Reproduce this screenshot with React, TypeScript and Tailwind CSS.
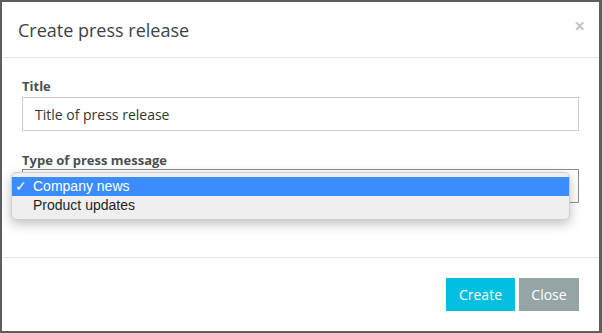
const App = () => {
  return (
    <div className="w-[602px] h-[333px] bg-[#5e5e5e] pt-[2px] pl-[2px] pr-[3px] pb-[2px]">
      <div
        className="relative h-full w-full bg-white flex flex-col"
        style={{ fontFamily: '"Open Sans", sans-serif' }}
      >
        {/* Header */}
        <div className="h-[56px] shrink-0 flex items-center justify-between pl-[16px] pr-[14px] border-b border-[#e5e5e5]">
          <h4 className="text-[18px] text-[#3d4247] leading-none">Create press release</h4>
          <span className="text-[19px] font-bold text-[#c4c4c4] leading-none -mt-[6px]">×</span>
        </div>

        {/* Body */}
        <div className="flex-1 px-[20px] pt-[19px]">
          <label className="block text-[13px] font-bold text-[#4a4f54] leading-[18px] mb-[2px]">Title</label>
          <div className="h-[34px] border border-[#cccccc] flex items-center px-[12px] text-[14px] text-[#333]">
            Title of press release
          </div>
          <label className="block mt-[20px] text-[13px] font-bold text-[#4a4f54] leading-[18px]">Type of press message</label>
          <div className="h-[34px] border border-[#8e8e8e]" />
        </div>

        {/* Footer */}
        <div className="shrink-0 border-t border-[#e5e5e5] flex justify-end gap-[4px] px-[20px] pt-[20px] pb-[20px]">
          <button className="h-[33px] w-[69px] bg-[#00bfe0] text-white text-[14px]">Create</button>
          <button className="h-[33px] w-[60px] bg-[#95a5a6] text-white text-[14px]">Close</button>
        </div>

        {/* Native select dropdown */}
        <div
          className="absolute left-[9px] top-[170px] w-[559px] rounded-[5px] bg-[#efefef] border border-[#cfcfcf] shadow-[0_4px_12px_rgba(0,0,0,0.25)] pt-[4px] pb-[4px] text-[14px] text-[#1f1f1f]"
          style={{ fontFamily: '"Liberation Sans", Arial, sans-serif' }}
        >
          <div className="h-[19px] bg-[#3b8cff] text-white flex items-center">
            <span className="w-[21px] pl-[3px]">✓</span>
            <span>Company news</span>
          </div>
          <div className="h-[19px] flex items-center">
            <span className="w-[21px]" />
            <span>Product updates</span>
          </div>
        </div>
      </div>
    </div>
  );
};

export default App;
